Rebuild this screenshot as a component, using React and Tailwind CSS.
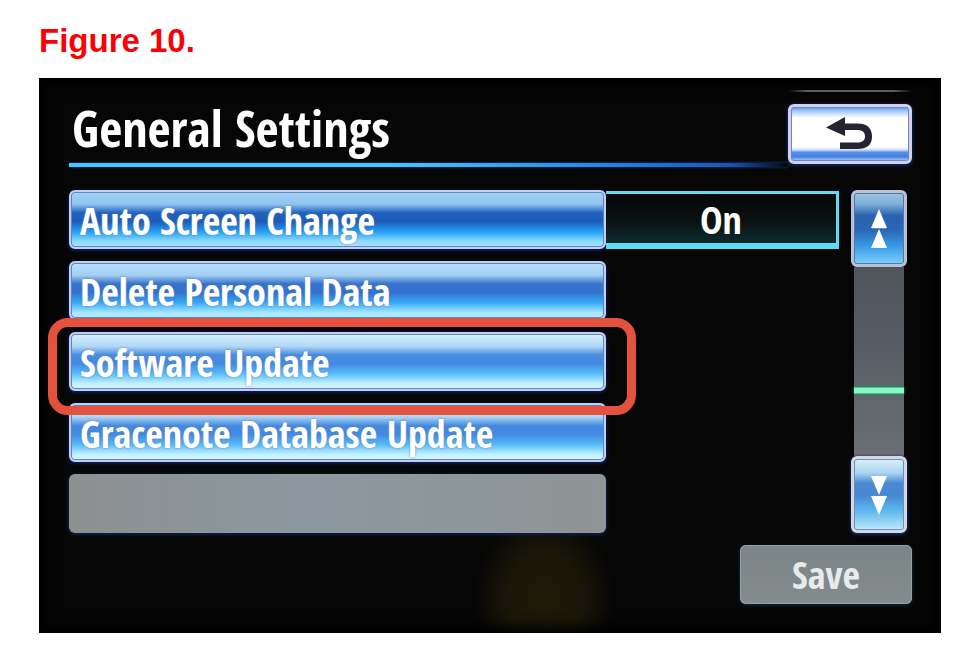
import React, { useState } from 'react';

const keyBase =
    'rounded-md border-2 border-[#c3cdf0] shadow-[inset_0_0_0_1px_#5f86b8,0_1px_3px_1px_#0b1d55]';

const menuItems = [
    {
        label: 'Auto Screen Change',
        fill: 'bg-[linear-gradient(to_bottom,#a3d3f6_0%,#90c3ee_22%,#1f62bd_38%,#1c5cb8_54%,#22a0f5_72%,#8fdcff_90%,#a9e4ff_100%)]',
    },
    {
        label: 'Delete Personal Data',
        fill: 'bg-[linear-gradient(to_bottom,#b9e0fb_0%,#a3cff3_22%,#3574cb_38%,#3272cd_54%,#35a9f6_72%,#a5e6ff_90%,#b4ebff_100%)]',
    },
    {
        label: 'Software Update',
        highlighted: true,
        fill: 'bg-[linear-gradient(to_bottom,#d8f0fd_0%,#b2d9f6_22%,#478de0_38%,#438ae2_54%,#55bdf8_72%,#c2f0ff_90%,#d3f5ff_100%)]',
    },
    {
        label: 'Gracenote Database Update',
        fill: 'bg-[linear-gradient(to_bottom,#d8f0fd_0%,#a9d3f5_22%,#4389de_38%,#438ae2_54%,#55bdf8_72%,#c2f0ff_90%,#d8f6ff_100%)]',
    },
];

const BackIcon = () => (
    <svg width="48" height="34" viewBox="0 0 48 34" aria-hidden="true">
        <path d="M0 10.500 L19 0 V6.500 H31 C41 6.500 46 11 46 19.500 C46 28 41 32 31 32 H14 V25.500 H31 C36 25.500 39 23.500 39 19.500 C39 15 36 13 31 13 H19 V19 Z" fill="#262430" />
    </svg>
);

const DoubleArrow = ({ down }) => (
    <svg width="18" height="40" viewBox="0 0 18 40" className={down ? 'rotate-180' : ''} aria-hidden="true">
        <path d="M9 0 L17 19 H1 Z M9 20 L17 39 H1 Z" fill="#ffffff" />
        <path d="M2 19.500 H16" stroke="#5d8fc4" strokeWidth="1" />
    </svg>
);

const App = () => {
    const [autoChange, setAutoChange] = useState(true);

    return (
        <main className="min-h-screen bg-white pl-[39px] pr-5 pt-5 pb-7">
            <h1 className="font-['Liberation_Sans',Arial,sans-serif] font-bold text-[33px] leading-[42px] text-[#fb0007]">
                Figure 10.
            </h1>

            <section className="mt-4 pl-[30px] pr-[29px] pb-[29px] bg-[#060606] bg-[radial-gradient(ellipse_70px_90px_at_56%_94%,#201b0a_0%,#191507_55%,#060606_100%)] shadow-[inset_0_0_14px_6px_#000000] font-['Open_Sans_Condensed','Roboto_Condensed','Open_Sans',sans-serif] font-bold text-white">
                {/* Title bar */}
                <div className="flex pt-3">
                    <header className="flex-1 pt-2">
                        <h2 className="pl-[3px] pb-[5px] text-[50px] leading-[60px]">General Settings</h2>
                        <div className="h-1 bg-[linear-gradient(to_right,#4ac4f8_0%,#4ac4f8_45%,#1f86e8_75%,#1a55b5_92%,#060606_100%)] shadow-[0_0_3px_#0d48a0]" />
                    </header>
                    <div className="w-[124px]">
                        <div className="mb-3 h-0.5 bg-[linear-gradient(to_right,#060606,#5b5f5c_15%,#5b5f5c_85%,#060606)]" />
                        <button
                            type="button"
                            aria-label="Back"
                            className="flex h-[60px] w-full items-center justify-center rounded-md border-3 border-[#d3d0ee] bg-[linear-gradient(to_bottom,#4f96ec_0%,#a9ccf8_8%,#ffffff_20%,#ffffff_74%,#d3e2fb_79%,#5890e8_84%,#4480e2_92%,#b4d0f6_100%)] shadow-[inset_0_0_0_1px_#6f86c0,0_1px_3px_1px_#10255c]"
                        >
                            <BackIcon />
                        </button>
                    </div>
                </div>

                {/* Settings list and scroll bar */}
                <div className="flex pt-[23px] pr-[5px] gap-3">
                    <ul className="flex-1 flex flex-col gap-3">
                        {menuItems.map((item) => (
                            <li key={item.label} className="relative grid grid-cols-[536fr_233fr]">
                                <button
                                    type="button"
                                    className={`h-[59px] pl-[9px] text-left text-[38px] leading-[52px] whitespace-nowrap [text-shadow:0_0_2px_#6d7fae] ${keyBase} ${item.fill}`}
                                >
                                    {item.label}
                                </button>
                                {item.label === 'Auto Screen Change' && (
                                    <button
                                        type="button"
                                        aria-pressed={autoChange}
                                        onClick={() => setAutoChange(!autoChange)}
                                        className="h-[58px] mt-px border-t-3 border-r-3 border-b-6 border-[#5fdcf4] bg-[linear-gradient(to_bottom,#060808,#0a0f10_50%,#0c2b2e)] text-[38px] leading-[50px]"
                                    >
                                        {autoChange ? 'On' : 'Off'}
                                    </button>
                                )}
                                {item.highlighted && (
                                    <span className="pointer-events-none absolute -top-3.5 -bottom-6 -left-[21px] right-[203px] z-10 rounded-[20px] border-9 border-[#e2523f]" />
                                )}
                            </li>
                        ))}
                        <li className="grid grid-cols-[536fr_233fr]">
                            <button type="button" disabled aria-label="Empty" className="h-[59px] rounded-md bg-[linear-gradient(to_right,#8d9091,#8b989f_45%,#8f9495)] shadow-[0_1px_3px_1px_#0a2245]" />
                        </li>
                    </ul>

                    <div className="w-14 flex flex-col">
                        <button
                            type="button"
                            aria-label="Scroll up"
                            className="flex h-[77px] items-center justify-center rounded-md border-3 border-[#b9c0d8] bg-[linear-gradient(to_bottom,#9cc6e0_0%,#7fb0d8_15%,#2a62ae_32%,#2b66b5_52%,#389be6_75%,#7fd0fa_100%)] shadow-[inset_0_0_0_1px_#5577a5]"
                        >
                            <DoubleArrow />
                        </button>
                        <div className="mx-[3px] flex-1 flex flex-col bg-[linear-gradient(to_bottom,#50565c,#575c64_40%,#6a7073)]">
                            <div className="grow-[121]" />
                            <div className="h-[7px] border-y border-[#35c98a] bg-[#8ff5c4] shadow-[0_0_3px_#1f9a60]" />
                            <div className="grow-[62]" />
                        </div>
                        <button
                            type="button"
                            aria-label="Scroll down"
                            className="flex h-[77px] items-center justify-center rounded-md border-3 border-[#d9d6e4] bg-[linear-gradient(to_bottom,#d9f0f8_0%,#a9d4f0_20%,#4a88d2_34%,#4787d4_50%,#5bb5ec_72%,#bceafa_100%)] shadow-[inset_0_0_0_1px_#6d8fb5,0_1px_3px_1px_#12285c]"
                        >
                            <DoubleArrow down />
                        </button>
                    </div>
                </div>

                <div className="flex justify-end pt-3">
                    <button
                        type="button"
                        className="h-[59px] w-[172px] rounded-md bg-[linear-gradient(to_bottom,#7b8486,#848b8d)] text-[38px] leading-[59px] text-[#e6ebee] shadow-[inset_0_0_0_1px_#93a0a4,0_1px_3px_1px_#0b1f2c]"
                    >
                        Save
                    </button>
                </div>
            </section>
        </main>
    );
};

export default App;
